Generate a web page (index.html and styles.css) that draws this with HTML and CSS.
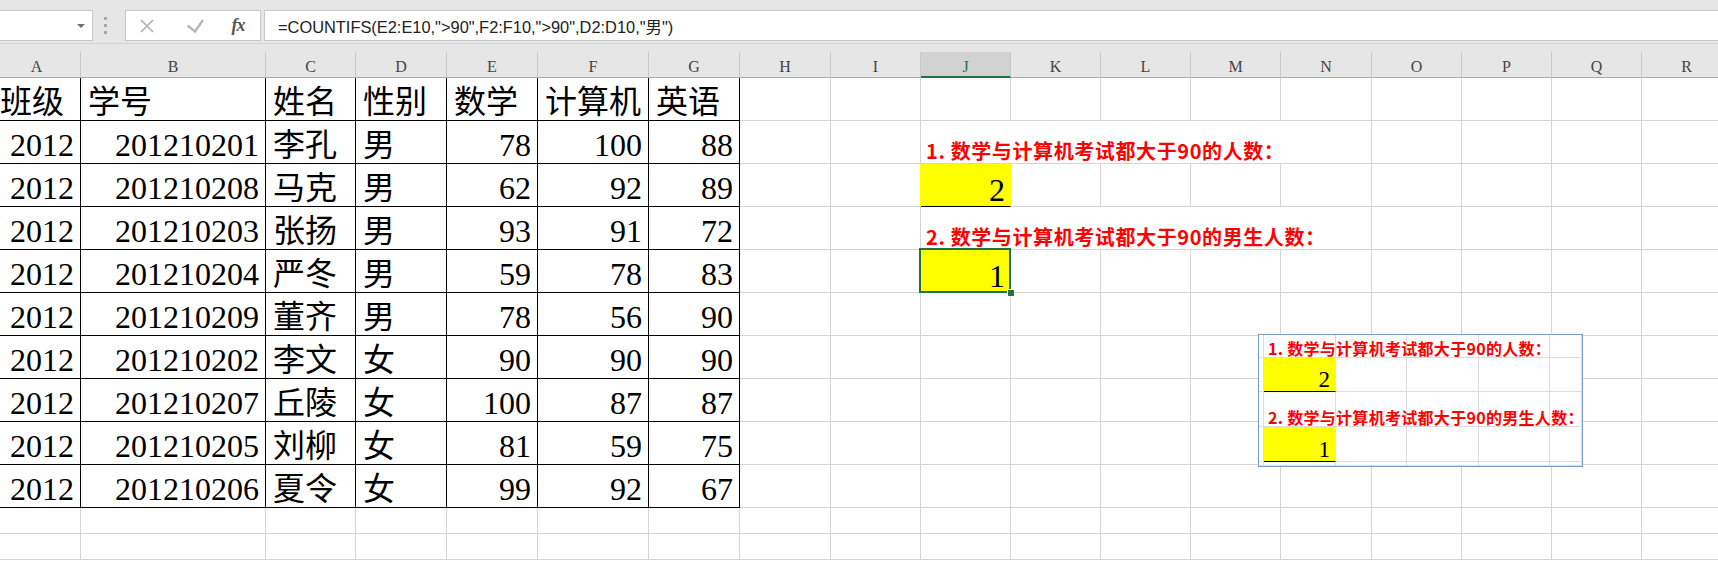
FILE: index.html
```html
<!DOCTYPE html>
<html lang="zh-CN">
<head>
  <meta charset="UTF-8" />
  <meta name="viewport" content="width=device-width, initial-scale=1.0"/>
  <title>COUNTIFS</title>
  <link rel="stylesheet" href="styles.css">
</head>
<body>

  <div class="top">
    <div class="toolbar">
      <div class="namebox"><span class="caret"></span></div>
      <div class="grip"><i></i><i></i><i></i></div>
      <div class="fxbtns">
        <span class="btn x">
          <svg width="14" height="14" viewBox="0 0 14 14"><path d="M1 1L13 13M13 1L1 13" stroke="#b0b0b0" stroke-width="1.6" fill="none"/></svg>
        </span>
        <span class="btn ok">
          <svg width="18" height="14" viewBox="0 0 18 14"><path d="M1.5 6.5L9 12.5L17 1" stroke="#b8b8b8" stroke-width="2.4" fill="none"/></svg>
        </span>
        <span class="btn fx">fx</span>
      </div>
      <div class="formula">=COUNTIFS(E2:E10,"&gt;90",F2:F10,"&gt;90",D2:D10,"男")</div>
    </div>
  </div>

  <div class="sheet">
    <div class="row">
      <div class="c col">A</div><div class="c col">B</div><div class="c col">C</div><div class="c col">D</div>
      <div class="c col">E</div><div class="c col">F</div><div class="c col">G</div><div class="c col">H</div>
      <div class="c col">I</div><div class="c col on">J</div><div class="c col">K</div><div class="c col">L</div>
      <div class="c col">M</div><div class="c col">N</div><div class="c col">O</div><div class="c col">P</div>
      <div class="c col">Q</div><div class="c col">R</div>
    </div>

    <div class="row">
      <div class="c b">班级</div><div class="c b">学号</div><div class="c b">姓名</div><div class="c b">性别</div>
      <div class="c b">数学</div><div class="c b">计算机</div><div class="c b">英语</div>
      <div class="c"></div><div class="c"></div><div class="c"></div><div class="c"></div><div class="c"></div>
      <div class="c"></div><div class="c"></div><div class="c"></div><div class="c"></div><div class="c"></div><div class="c"></div>
    </div>

    <div class="row">
      <div class="c b n">2012</div><div class="c b n">201210201</div><div class="c b">李孔</div><div class="c b">男</div>
      <div class="c b n">78</div><div class="c b n">100</div><div class="c b n">88</div>
      <div class="c"></div><div class="c"></div>
      <div class="c spill"><span class="note">1. 数学与计算机考试都大于90的人数：</span></div>
      <div class="c"></div><div class="c"></div><div class="c"></div><div class="c"></div><div class="c"></div>
      <div class="c"></div><div class="c"></div><div class="c"></div>
    </div>

    <div class="row">
      <div class="c b n">2012</div><div class="c b n">201210208</div><div class="c b">马克</div><div class="c b">男</div>
      <div class="c b n">62</div><div class="c b n">92</div><div class="c b n">89</div>
      <div class="c"></div><div class="c"></div>
      <div class="c n hl">2</div>
      <div class="c"></div><div class="c"></div><div class="c"></div><div class="c"></div><div class="c"></div>
      <div class="c"></div><div class="c"></div><div class="c"></div>
    </div>

    <div class="row">
      <div class="c b n">2012</div><div class="c b n">201210203</div><div class="c b">张扬</div><div class="c b">男</div>
      <div class="c b n">93</div><div class="c b n">91</div><div class="c b n">72</div>
      <div class="c"></div><div class="c"></div>
      <div class="c spill"><span class="note">2. 数学与计算机考试都大于90的男生人数：</span></div>
      <div class="c"></div><div class="c"></div><div class="c"></div><div class="c"></div><div class="c"></div>
      <div class="c"></div><div class="c"></div><div class="c"></div>
    </div>

    <div class="row">
      <div class="c b n">2012</div><div class="c b n">201210204</div><div class="c b">严冬</div><div class="c b">男</div>
      <div class="c b n">59</div><div class="c b n">78</div><div class="c b n">83</div>
      <div class="c"></div><div class="c"></div>
      <div class="c n hl sel">1</div>
      <div class="c"></div><div class="c"></div><div class="c"></div><div class="c"></div><div class="c"></div>
      <div class="c"></div><div class="c"></div><div class="c"></div>
    </div>

    <div class="row">
      <div class="c b n">2012</div><div class="c b n">201210209</div><div class="c b">董齐</div><div class="c b">男</div>
      <div class="c b n">78</div><div class="c b n">56</div><div class="c b n">90</div>
      <div class="c"></div><div class="c"></div><div class="c"></div><div class="c"></div><div class="c"></div>
      <div class="c"></div><div class="c"></div><div class="c"></div><div class="c"></div><div class="c"></div><div class="c"></div>
    </div>

    <div class="row">
      <div class="c b n">2012</div><div class="c b n">201210202</div><div class="c b">李文</div><div class="c b">女</div>
      <div class="c b n">90</div><div class="c b n">90</div><div class="c b n">90</div>
      <div class="c"></div><div class="c"></div><div class="c"></div><div class="c"></div><div class="c"></div>
      <div class="c"></div><div class="c"></div><div class="c"></div><div class="c"></div><div class="c"></div><div class="c"></div>
    </div>

    <div class="row">
      <div class="c b n">2012</div><div class="c b n">201210207</div><div class="c b">丘陵</div><div class="c b">女</div>
      <div class="c b n">100</div><div class="c b n">87</div><div class="c b n">87</div>
      <div class="c"></div><div class="c"></div><div class="c"></div><div class="c"></div><div class="c"></div>
      <div class="c"></div><div class="c"></div><div class="c"></div><div class="c"></div><div class="c"></div><div class="c"></div>
    </div>

    <div class="row">
      <div class="c b n">2012</div><div class="c b n">201210205</div><div class="c b">刘柳</div><div class="c b">女</div>
      <div class="c b n">81</div><div class="c b n">59</div><div class="c b n">75</div>
      <div class="c"></div><div class="c"></div><div class="c"></div><div class="c"></div><div class="c"></div>
      <div class="c"></div><div class="c"></div><div class="c"></div><div class="c"></div><div class="c"></div><div class="c"></div>
    </div>

    <div class="row">
      <div class="c b n">2012</div><div class="c b n">201210206</div><div class="c b">夏令</div><div class="c b">女</div>
      <div class="c b n">99</div><div class="c b n">92</div><div class="c b n">67</div>
      <div class="c"></div><div class="c"></div><div class="c"></div><div class="c"></div><div class="c"></div>
      <div class="c"></div><div class="c"></div><div class="c"></div><div class="c"></div><div class="c"></div><div class="c"></div>
    </div>

    <div class="row">
      <div class="c"></div><div class="c"></div><div class="c"></div><div class="c"></div><div class="c"></div><div class="c"></div>
      <div class="c"></div><div class="c"></div><div class="c"></div><div class="c"></div><div class="c"></div><div class="c"></div>
      <div class="c"></div><div class="c"></div><div class="c"></div><div class="c"></div><div class="c"></div><div class="c"></div>
    </div>

    <div class="row">
      <div class="c"></div><div class="c"></div><div class="c"></div><div class="c"></div><div class="c"></div><div class="c"></div>
      <div class="c"></div><div class="c"></div><div class="c"></div><div class="c"></div><div class="c"></div><div class="c"></div>
      <div class="c"></div><div class="c"></div><div class="c"></div><div class="c"></div><div class="c"></div><div class="c"></div>
    </div>
  </div>

  <!-- pasted picture of J2:N5 -->
  <div class="pic">
    <div class="p"></div><div class="p"><span class="pnote">1. 数学与计算机考试都大于90的人数：</span></div>
    <div class="p"></div><div class="p"></div><div class="p"></div><div class="p"></div>

    <div class="p"></div><div class="p pval">2</div>
    <div class="p"></div><div class="p"></div><div class="p"></div><div class="p"></div>

    <div class="p"></div><div class="p"><span class="pnote">2. 数学与计算机考试都大于90的男生人数：</span></div>
    <div class="p"></div><div class="p"></div><div class="p"></div><div class="p"></div>

    <div class="p"></div><div class="p pval">1</div>
    <div class="p"></div><div class="p"></div><div class="p"></div><div class="p"></div>

    <div class="p"></div><div class="p"></div><div class="p"></div><div class="p"></div><div class="p"></div><div class="p"></div>
  </div>

</body>
</html>
```

FILE: styles.css
```css
body {
  margin: 0;
  overflow: hidden;
  background-color: #ffffff;
  color: #000;
  font-family: "Liberation Serif", "Noto Sans CJK SC", serif;
}

/* formula bar */
.top {
  background-color: #e6e6e6;
  padding-bottom: 8px;
}

.toolbar {
  height: 44px;
  box-sizing: border-box;
  padding-top: 10px;
  display: flex;
  align-items: flex-start;
  border-bottom: 1px solid #d2d2d2;
}

.namebox {
  width: 88px;
  height: 29px;
  margin-left: -4px;
  border: 1px solid #c6c6c6;
  background: #fff;
  display: flex;
  align-items: center;
  justify-content: flex-end;
  padding-right: 7px;
}

.namebox .caret {
  width: 0;
  height: 0;
  border-left: 4px solid transparent;
  border-right: 4px solid transparent;
  border-top: 4px solid #707070;
}

.grip {
  display: flex;
  flex-direction: column;
  gap: 4px;
  margin: 7px 0 0 11px;
}

.grip i {
  display: block;
  width: 3px;
  height: 3px;
  background: #a8a8a8;
}

.fxbtns {
  width: 134px;
  height: 29px;
  margin-left: 18px;
  border: 1px solid #c6c6c6;
  background: #fff;
  display: flex;
  align-items: center;
}

.btn {
  width: 24px;
  display: flex;
  justify-content: center;
  align-items: center;
}

.btn.x {
  margin-left: 9px;
}

.btn.ok {
  margin-left: 24px;
}

.btn.fx {
  margin-left: 19px;
  font-family: "Liberation Serif", serif;
  font-style: italic;
  font-weight: bold;
  font-size: 18px;
  color: #555;
  letter-spacing: -1px;
}

.formula {
  flex: 1;
  height: 29px;
  margin-left: 3px;
  margin-right: -2px;
  border: 1px solid #c6c6c6;
  background: #fff;
  display: flex;
  align-items: center;
  padding-left: 13px;
  font-family: "Liberation Sans", "Noto Sans CJK SC", sans-serif;
  font-size: 16.4px;
  color: #222;
  white-space: nowrap;
}

/* sheet */
.sheet {
  display: grid;
  grid-template-columns: 88px 185px 90px 91px 91px 111px 91px 91px 90px 90px 90px 90px 90px 91px 90px 90px 90px 90px;
  grid-template-rows: 26px repeat(10, 43px) 26px 26px;
  margin-left: -7px;
  width: max-content;
}

.row {
  display: contents;
}

.c {
  box-sizing: border-box;
  border-right: 1px solid #d4d4d4;
  border-bottom: 1px solid #d4d4d4;
  display: flex;
  align-items: flex-end;
  white-space: nowrap;
  font-size: 32px;
  line-height: 1;
  padding: 0 6px 2px 7px;
  min-width: 0;
}

.c.col {
  background: #e6e6e6;
  border-right-color: #c8c8c8;
  border-bottom-color: #ababab;
  justify-content: center;
  font-size: 16px;
  color: #444;
  padding: 0 0 2px;
}

.c.col.on {
  background: #d2d2d2;
  color: #217346;
  border-bottom: 2px solid #217346;
  padding-bottom: 1px;
}

.c.b {
  border-right-color: #000;
  border-bottom-color: #000;
}

.c.n {
  justify-content: flex-end;
}

.c.hl {
  background: #ffff00;
  border-right-color: #ffff00;
  border-bottom-color: #000;
  box-shadow: -1px 0 0 #ffff00;
  padding: 0 5px 0 0;
}

.c.spill {
  position: relative;
}

.note {
  position: absolute;
  left: 0;
  top: 0;
  bottom: 0;
  z-index: 2;
  display: flex;
  align-items: flex-end;
  padding: 0 4px 2px 5px;
  background: #fff;
  font-family: "Noto Sans CJK SC", sans-serif;
  font-weight: bold;
  font-size: 20px;
  letter-spacing: 0.6px;
  color: #ff0000;
}

.c.sel {
  position: relative;
}

.c.sel::after {
  content: "";
  position: absolute;
  left: -2px;
  top: -2px;
  right: -1px;
  bottom: -1px;
  border: 2px solid #217346;
  z-index: 3;
}

.c.sel::before {
  content: "";
  position: absolute;
  right: -5px;
  bottom: -5px;
  width: 6px;
  height: 6px;
  background: #217346;
  border: 1px solid #fff;
  z-index: 4;
}

/* pasted picture */
.pic {
  position: absolute;
  left: 1258px;
  top: 334px;
  width: 323px;
  height: 131px;
  border: 1px solid #7b9ccb;
  background: #fff;
  display: grid;
  grid-template-columns: 5px 72px 71px 72px 71px 1fr;
  grid-template-rows: 23px 34px 35px 35px 1fr;
  overflow: hidden;
  z-index: 5;
}

.p {
  box-sizing: border-box;
  border-right: 1px solid #dcdcdc;
  border-bottom: 1px solid #dcdcdc;
  display: flex;
  align-items: flex-end;
  white-space: nowrap;
  line-height: 1;
  min-width: 0;
}

.pnote {
  position: relative;
  z-index: 1;
  padding: 0 0 1px 4px;
  font-family: "Noto Sans CJK SC", sans-serif;
  font-weight: bold;
  font-size: 16px;
  letter-spacing: 0.3px;
  color: #ff0000;
}

.p.pval {
  background: #ffff00;
  border-bottom-color: #000;
  border-right-color: #ffff00;
  justify-content: flex-end;
  padding-right: 5px;
  font-size: 23px;
}
```
